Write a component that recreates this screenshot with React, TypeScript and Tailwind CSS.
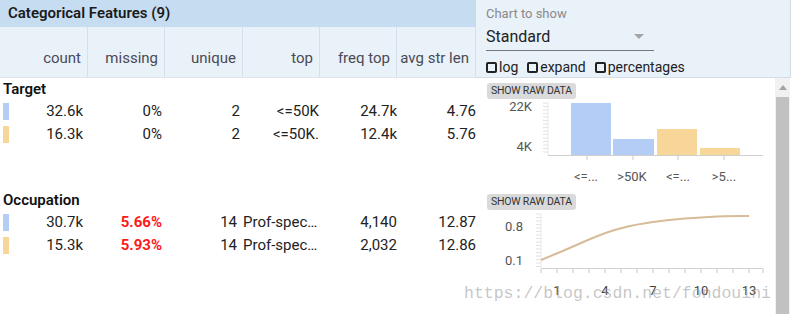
import React from 'react';

const headCols = [
  { label: 'count', w: 'w-[88px]' },
  { label: 'missing', w: 'w-[77px]' },
  { label: 'unique', w: 'w-[78px]' },
  { label: 'top', w: 'w-[77px]' },
  { label: 'freq top', w: 'w-[77px]' },
  { label: 'avg str len', w: 'w-[79px]' },
];

interface Row {
  color: string;
  count: string;
  missing: string;
  unique: string;
  top: string;
  freq: string;
  avg: string;
}

interface Feature {
  name: string;
  rows: Row[];
  chart: 'bar' | 'line';
}

const features: Feature[] = [
  {
    name: 'Target',
    chart: 'bar',
    rows: [
      { color: 'bg-[#b3cdf7]', count: '32.6k', missing: '0%', unique: '2', top: '<=50K', freq: '24.7k', avg: '4.76' },
      { color: 'bg-[#f8d598]', count: '16.3k', missing: '0%', unique: '2', top: '<=50K.', freq: '12.4k', avg: '5.76' },
    ],
  },
  {
    name: 'Occupation',
    chart: 'line',
    rows: [
      { color: 'bg-[#b3cdf7]', count: '30.7k', missing: '5.66%', unique: '14', top: 'Prof-spec…', freq: '4,140', avg: '12.87' },
      { color: 'bg-[#f8d598]', count: '15.3k', missing: '5.93%', unique: '14', top: 'Prof-spec…', freq: '2,032', avg: '12.86' },
    ],
  },
];

const BarChart = () => {
  const ticks = [];
  for (let y = 4; y <= 56; y += 3.5) ticks.push(y);
  return (
    <svg width="299" height="90" className="block">
      {ticks.map((y) => (
        <line key={y} x1="67" x2="72" y1={y} y2={y} stroke="#e2e2e2" strokeWidth="1" />
      ))}
      <line x1="72" x2="72" y1="4" y2="56" stroke="#e8e8e8" />
      <text x="56" y="9" textAnchor="end" dominantBaseline="middle" fontSize="13" fill="#555">22K</text>
      <text x="56" y="49" textAnchor="end" dominantBaseline="middle" fontSize="13" fill="#555">4K</text>
      <rect x="95" y="4" width="40" height="52" fill="#b3cdf7" />
      <rect x="137" y="40" width="41" height="16" fill="#b3cdf7" />
      <rect x="181" y="30" width="40" height="26" fill="#f8d598" />
      <rect x="224" y="49" width="40" height="7" fill="#f8d598" />
      <line x1="72" x2="287" y1="56.5" y2="56.5" stroke="#d0d0d0" />
      {[111, 157, 202, 248].map((x) => (
        <line key={x} x1={x} x2={x} y1="57" y2="61" stroke="#c8c8c8" />
      ))}
      {[
        ['<=...', 110],
        ['>50K', 156],
        ['<=...', 202],
        ['>5...', 248],
      ].map(([t, x], i) => (
        <text key={i} x={x} y="79" textAnchor="middle" dominantBaseline="middle" fontSize="13" fill="#555">
          {t}
        </text>
      ))}
    </svg>
  );
};

const LineChart = () => {
  const ticks = [];
  for (let y = 4; y <= 58; y += 3.5) ticks.push(y);
  const ys = [50, 43.5, 36.5, 29.5, 23, 18, 14.5, 12, 10, 8.5, 7.5, 6.5, 6, 6];
  // smooth the curve with simple quadratic segments through midpoints
  const xs = ys.map((_, k) => 65 + 16 * k);
  let d = `M${xs[0]},${ys[0]}`;
  for (let k = 1; k < ys.length - 1; k++) {
    const mx = (xs[k] + xs[k + 1]) / 2;
    const my = (ys[k] + ys[k + 1]) / 2;
    d += ` Q${xs[k]},${ys[k]} ${mx},${my}`;
  }
  d += ` L${xs[ys.length - 1]},${ys[ys.length - 1]}`;
  return (
    <svg width="299" height="104" className="block">
      {ticks.map((y) => (
        <line key={y} x1="60" x2="65" y1={y} y2={y} stroke="#e2e2e2" strokeWidth="1" />
      ))}
      <line x1="65" x2="65" y1="4" y2="58" stroke="#e8e8e8" />
      <text x="47" y="18" textAnchor="end" dominantBaseline="middle" fontSize="13" fill="#555">0.8</text>
      <text x="47" y="52" textAnchor="end" dominantBaseline="middle" fontSize="13" fill="#555">0.1</text>
      <line x1="65" x2="287" y1="58.5" y2="58.5" stroke="#d0d0d0" />
      {xs.map((x) => (
        <line key={x} x1={x} x2={x} y1="59" y2="63" stroke="#c8c8c8" />
      ))}
      <line x1="287" x2="287" y1="59" y2="63" stroke="#c8c8c8" />
      <path d={d} fill="none" stroke="#d6bc98" strokeWidth="2" strokeLinejoin="round" />
      {[
        ['1', 81],
        ['4', 129],
        ['7', 177],
        ['10', 225],
        ['13', 273],
      ].map(([t, x]) => (
        <text key={t} x={x} y="82" textAnchor="middle" dominantBaseline="middle" fontSize="13" fill="#444">
          {t}
        </text>
      ))}
    </svg>
  );
};

const FeatureBlock = ({ f }: { f: Feature }) => (
  <div className="flex h-[111px]">
    <div className="w-[476px] text-[15px] text-[#222]">
      <div className="h-[22px] pl-[3px] flex items-center font-semibold text-[#111]">{f.name}</div>
      {f.rows.map((r, i) => (
        <div key={i} className="flex h-[23px] items-center">
          <div className="w-[83px] pl-[3px] flex items-center justify-between">
            <span className={`w-[6px] h-[17px] ${r.color}`} />
            <span>{r.count}</span>
          </div>
          <div
            className={`w-[79px] text-right ${r.missing === '0%' ? '' : 'text-[#ff1a1a] font-bold'}`}
          >
            {r.missing}
          </div>
          <div className={`w-[78px] text-right ${r.unique === '14' ? 'pr-[3px]' : ''}`}>{r.unique}</div>
          <div className={`w-[79px] whitespace-nowrap ${r.top.startsWith('Prof') ? 'pl-[3px]' : 'text-right'}`}>
            {r.top}
          </div>
          <div className="w-[78px] text-right">{r.freq}</div>
          <div className="w-[79px] text-right">{r.avg}</div>
        </div>
      ))}
    </div>
    <div className="w-[299px]">
      <div className="mt-[5px] ml-[11px] h-[16px] w-fit px-[4px] flex items-center rounded-[3px] bg-[#dadada] text-[10.5px] tracking-[-0.2px] text-[#333] uppercase">
        Show raw data
      </div>
      {f.chart === 'bar' ? <BarChart /> : <LineChart />}
    </div>
  </div>
);

export default function App() {
  return (
    <div className="w-[797px] h-[314px] overflow-hidden bg-white relative font-['Roboto',sans-serif]">
      <div className="flex h-[78px]">
        <div className="w-[476px]">
          <div className="h-[27px] bg-[#c6dcf1] pl-[8px] flex items-center text-[15px] font-semibold text-[#1a1a1a]">
            Categorical Features (9)
          </div>
          <div className="h-[51px] flex bg-[#e9f1f9] border-b border-[#dde4ec]">
            {headCols.map((c) => (
              <div
                key={c.label}
                className={`${c.w} h-full border-r border-[#d7dfe8] flex items-end justify-end pr-[6px] pb-[8px] text-[15px] text-[#4a4a55] whitespace-nowrap`}
              >
                {c.label}
              </div>
            ))}
          </div>
        </div>
        <div className="w-[315px] h-full bg-[#e9f1f9] border-r border-b border-[#d3dde8] pl-[10px] pt-[5px]">
          <div className="text-[13px] text-[#8a8a8a] leading-[18px]">Chart to show</div>
          <div className="w-[168px] h-[28px] border-b border-[#777] flex items-center justify-between pr-[10px]">
            <span className="text-[16px] text-[#222]">Standard</span>
            <span className="w-0 h-0 border-l-[5px] border-r-[5px] border-t-[5px] border-l-transparent border-r-transparent border-t-[#a5a5a5]" />
          </div>
          <div className="flex items-center mt-[9px] text-[14px] text-[#222] leading-[14px]">
            {['log', 'expand', 'percentages'].map((l) => (
              <label key={l} className="flex items-center mr-[9px]">
                <span className="w-[11px] h-[11px] border-2 border-[#222] rounded-[2px] mr-[2px]" />
                {l}
              </label>
            ))}
          </div>
        </div>
      </div>
      <div className="flex h-[236px]">
        <div className="w-[775px]">
          {features.map((f) => (
            <FeatureBlock key={f.name} f={f} />
          ))}
        </div>
        <div className="w-[15px] bg-[#f1f1f1] flex flex-col items-center">
          <div className="h-[19px] flex items-center justify-center">
            <span className="w-0 h-0 border-l-[4px] border-r-[4px] border-b-[5px] border-l-transparent border-r-transparent border-b-[#a3a3a3]" />
          </div>
          <div className="flex-1 w-[13px] bg-[#c1c1c1]" />
        </div>
      </div>
      <div className="absolute left-[464px] top-[282px] pointer-events-none font-['Liberation_Mono',monospace] text-[16.5px] text-[#a0a0a0]/60 whitespace-nowrap">
        https://blog.csdn.net/fondouini
      </div>
    </div>
  );
}
